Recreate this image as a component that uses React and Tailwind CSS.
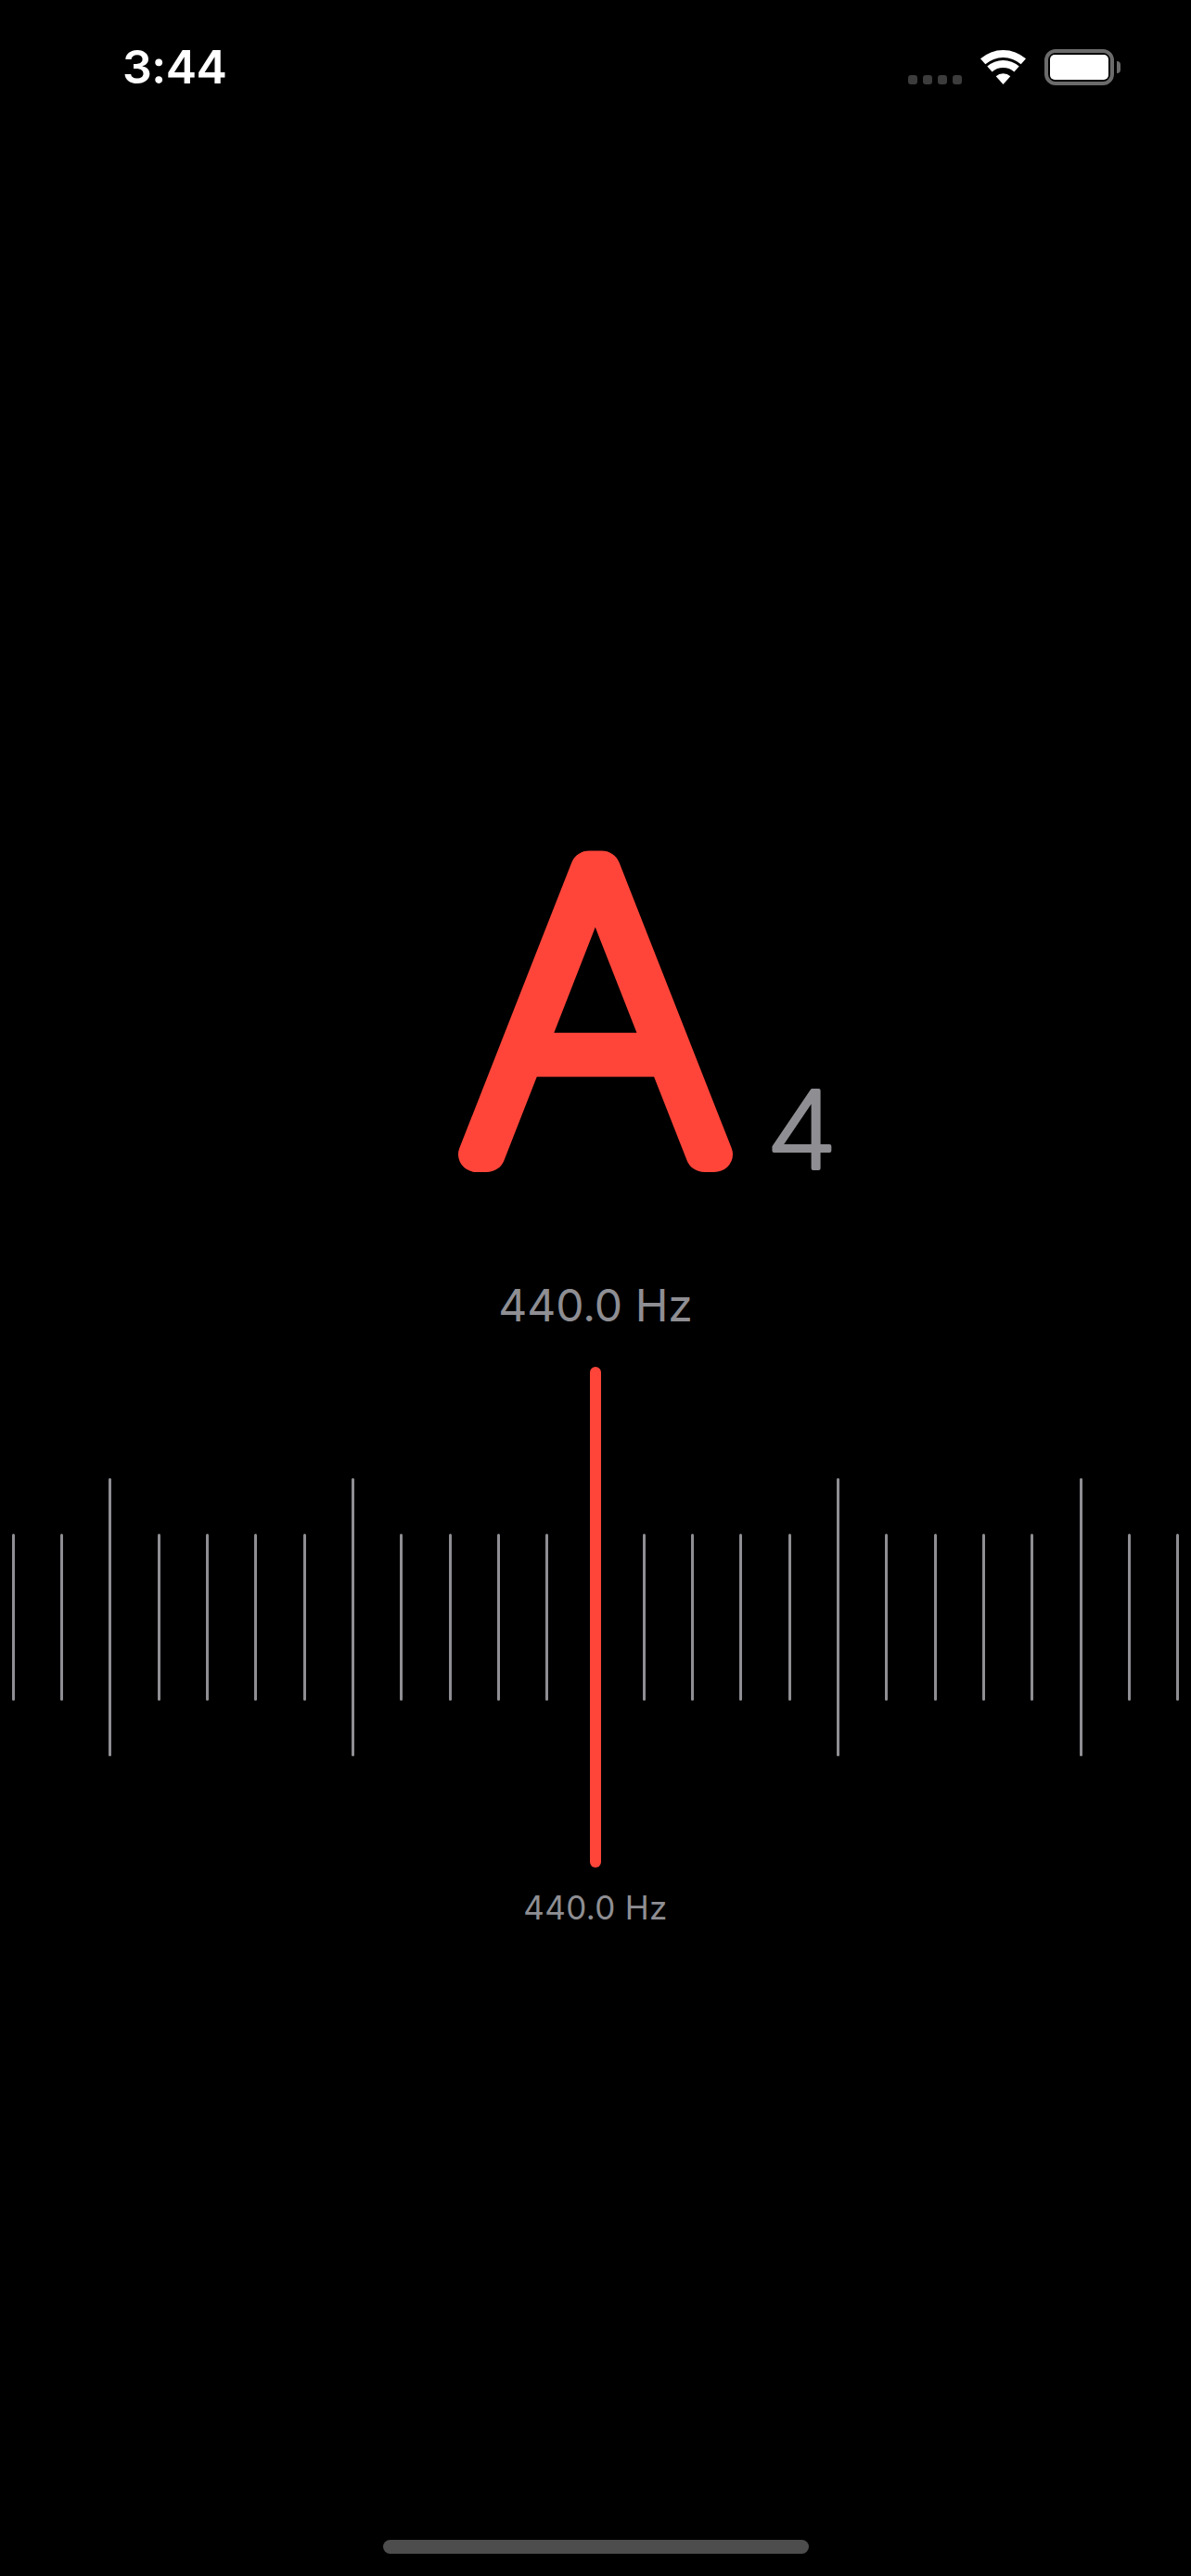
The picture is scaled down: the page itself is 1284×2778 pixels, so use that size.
const ticks = Array.from({ length: 25 }, (_, i) => i - 12);

const StatusBar = () => (
    <div className="flex h-[110px] justify-between pl-[132px] pr-[76px]">
        <span className="mt-[47px] h-[50px] text-[50px] leading-[50px] font-semibold text-white font-['Inter',sans-serif] tracking-[-0.5px]">3:44</span>
        <div className="flex items-start pt-[53px]">
            <div className="mt-[28px] flex gap-[6px]">
                <div className="w-[10px] h-[10px] rounded-[3px] bg-[#3c3c3c]"></div>
                <div className="w-[10px] h-[10px] rounded-[3px] bg-[#3c3c3c]"></div>
                <div className="w-[10px] h-[10px] rounded-[3px] bg-[#3c3c3c]"></div>
                <div className="w-[10px] h-[10px] rounded-[3px] bg-[#3c3c3c]"></div>
            </div>
            <svg className="ml-[20px] mt-[1px]" width="49" height="37" viewBox="0 0 49 37" fill="#fff">
                <path d="M0 9.3A37 37 0 0 1 49 9.3L43.7 15.3A29 29 0 0 0 5.3 15.3Z" />
                <path d="M7.3 17.5A26 26 0 0 1 41.7 17.5L36.4 23.5A18 18 0 0 0 12.6 23.5Z" />
                <path d="M16.7 28.2A11.7 11.7 0 0 1 32.3 28.2L24.5 37Z" />
            </svg>
            <div className="ml-[20px] flex items-center">
                <div className="w-[75px] h-[39px] rounded-[12px] border-[4px] border-[#6b6b6b] p-[2px]">
                    <div className="w-full h-full rounded-[5px] bg-white"></div>
                </div>
                <div className="ml-[3px] w-[4px] h-[13px] rounded-r-full bg-[#6b6b6b]"></div>
            </div>
        </div>
    </div>
);

const Note = () => (
    <div className="mt-[770px] grid grid-cols-[1fr_360px_1fr] items-end">
        <div></div>
        <svg width="360" height="400" viewBox="0 0 360 400" className="block overflow-visible">
            <text
                transform="translate(180 365) scale(1.05 1)"
                textAnchor="middle"
                fontSize="424"
                fontWeight="100"
                fill="#ff453a"
                stroke="#ff453a"
                strokeWidth="38"
                strokeLinejoin="round"
                className="font-['Inter',sans-serif]"
            >
                A
            </text>
        </svg>
        <svg width="90" height="110" viewBox="0 0 90 110" className="block ml-[4px] mb-[16px] overflow-visible">
            <text
                transform="translate(0 106) scale(1.08 1)"
                fontSize="116"
                fontWeight="200"
                fill="#8e8e93"
                stroke="#8e8e93"
                strokeWidth="4"
                strokeLinejoin="round"
                className="font-['Inter',sans-serif]"
            >
                4
            </text>
        </svg>
    </div>
);

const Ruler = () => (
    <div className="relative mt-[36px] h-[540px] flex items-center justify-center overflow-hidden">
        {ticks.map((t) => (
            <div key={t} className="w-[52.33px] shrink-0 flex justify-center">
                <div className={t % 5 === 0 ? 'w-[3px] h-[300px] rounded-full bg-[#8e8e93]' : 'w-[3px] h-[180px] rounded-full bg-[#8e8e93]'}></div>
            </div>
        ))}
        <div className="absolute left-[636px] top-0 w-[12px] h-full rounded-full bg-[#ff453a]"></div>
    </div>
);

export default function App() {
    return (
        <div className="relative w-[1284px] h-[2778px] bg-black overflow-hidden font-['Inter',sans-serif]">
            <StatusBar />
            <Note />
            <p className="mt-[98px] text-center text-[48px] leading-[60px] text-[#8e8e93]">440.0 Hz</p>
            <Ruler />
            <p className="mt-[20px] text-center text-[35px] leading-[46px] tracking-[0.3px] text-[#8e8e93]">440.0 Hz</p>
            <div className="absolute bottom-[24px] left-[413px] w-[459px] h-[15px] rounded-full bg-[#4d4d4d]"></div>
        </div>
    );
}
